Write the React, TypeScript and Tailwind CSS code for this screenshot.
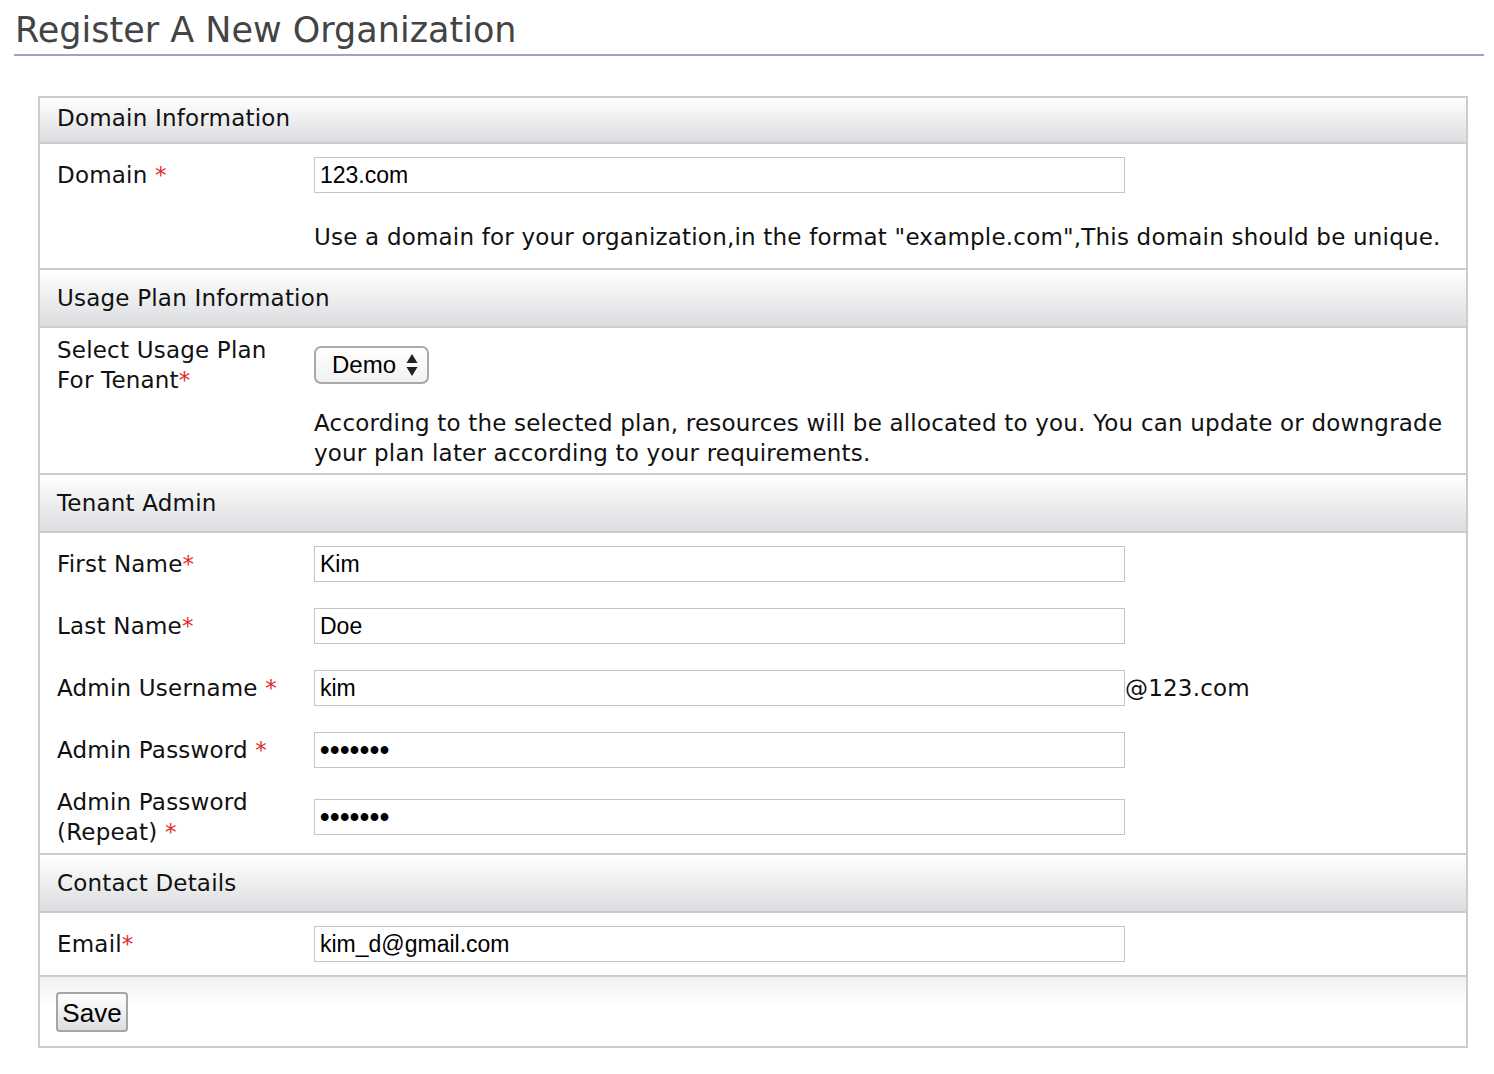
const lucida = "font-['DejaVu_Sans',sans-serif]"

function Req({ space = true }: { space?: boolean }) {
  return <span className="text-[#e52a2a]">{space ? " *" : "*"}</span>
}

function SectionHeader({ title, first = false }: { title: string; first?: boolean }) {
  return (
    <div
      className={`flex items-center px-[17px] border-b-2 border-[#cccccc] bg-gradient-to-b from-white to-[#dcdde0] ${
        first ? "h-[46px] pb-[4px]" : "h-[60px] border-t-2"
      }`}
    >
      <span className="text-[23px] tracking-[0.2px] text-[#111]">{title}</span>
    </div>
  )
}

function TextInput({ value, password = false }: { value: string; password?: boolean }) {
  return (
    <div className="w-[811px] h-[36px] border border-[#c4c4c4] bg-white flex items-center px-[5px] font-['Liberation_Sans',Arial,sans-serif] text-[23px] text-black shrink-0">
      {password ? <span className="tracking-[0.5px] text-[27px] font-bold">•••••••</span> : value}
    </div>
  )
}

function Row({ label, children, className = "h-[62px]" }: { label: React.ReactNode; children: React.ReactNode; className?: string }) {
  return (
    <div className={`flex items-center ${className}`}>
      <div className="w-[274px] pl-[17px] shrink-0 text-[23px] tracking-[0.2px] leading-[30px] text-[#111]">{label}</div>
      {children}
    </div>
  )
}

export default function App() {
  return (
    <div className={`w-[1494px] min-h-[1074px] bg-white ${lucida}`}>
      <div className="pl-[14px] pr-[10px] pt-[6px]">
        <h1 className="text-[35px] leading-[48px] text-[#444] pl-[1px] border-b-2 border-[#9aa6c4]">Register A New Organization</h1>
      </div>

      <div className="ml-[38px] mt-[40px] w-[1430px] border-2 border-[#cccccc]">
        <SectionHeader title="Domain Information" first />
        <Row label={<>Domain<Req /></>}>
          <TextInput value="123.com" />
        </Row>
        <div className="h-[62px] flex items-center pl-[274px] text-[23px] tracking-[0.2px] text-[#111]">
          Use a domain for your organization,in the format "example.com",This domain should be unique.
        </div>

        <SectionHeader title="Usage Plan Information" />
        <Row label={<>Select Usage Plan<br />For Tenant<Req space={false} /></>} className="py-[7px]">
          <div className="w-[115px] h-[38px] pl-[16px] flex items-center gap-[10px] border-2 border-[#a9a9a9] rounded-[7px] bg-gradient-to-b from-white to-[#f1f1f1] font-['Liberation_Sans',Arial,sans-serif] text-[24px] text-black">
            <span>Demo</span>
            <svg width="12" height="24" viewBox="0 0 12 24">
              <path d="M6 1 L11.5 10 L0.5 10 Z" fill="#222" />
              <path d="M0.5 14 L11.5 14 L6 23 Z" fill="#222" />
            </svg>
          </div>
        </Row>
        <div className="pt-[6px] pb-[5px] pl-[274px] pr-[4px] text-[23px] tracking-[0.2px] leading-[30px] text-[#111]">
          According to the selected plan, resources will be allocated to you. You can update or downgrade your plan later according to your requirements.
        </div>

        <SectionHeader title="Tenant Admin" />
        <Row label={<>First Name<Req space={false} /></>}>
          <TextInput value="Kim" />
        </Row>
        <Row label={<>Last Name<Req space={false} /></>}>
          <TextInput value="Doe" />
        </Row>
        <Row label={<>Admin Username<Req /></>}>
          <TextInput value="kim" />
          <span className="text-[23px] tracking-[0.2px] text-[#111]">@123.com</span>
        </Row>
        <Row label={<>Admin Password<Req /></>}>
          <TextInput value="" password />
        </Row>
        <Row label={<>Admin Password<br />(Repeat)<Req /></>} className="h-[72px]">
          <TextInput value="" password />
        </Row>

        <SectionHeader title="Contact Details" />
        <Row label={<>Email<Req space={false} /></>}>
          <TextInput value="kim_d@gmail.com" />
        </Row>

        <div className="border-t-2 border-[#cccccc] bg-gradient-to-b from-[#f0f0f0] to-white to-[40%] h-[71px] flex items-center pl-[16px]">
          <button className="w-[72px] h-[40px] rounded-[4px] border-2 border-[#a6a6a6] bg-gradient-to-b from-white to-[#dedede] font-['Liberation_Sans',Arial,sans-serif] text-[26px] text-black">
            Save
          </button>
        </div>
      </div>
    </div>
  )
}
